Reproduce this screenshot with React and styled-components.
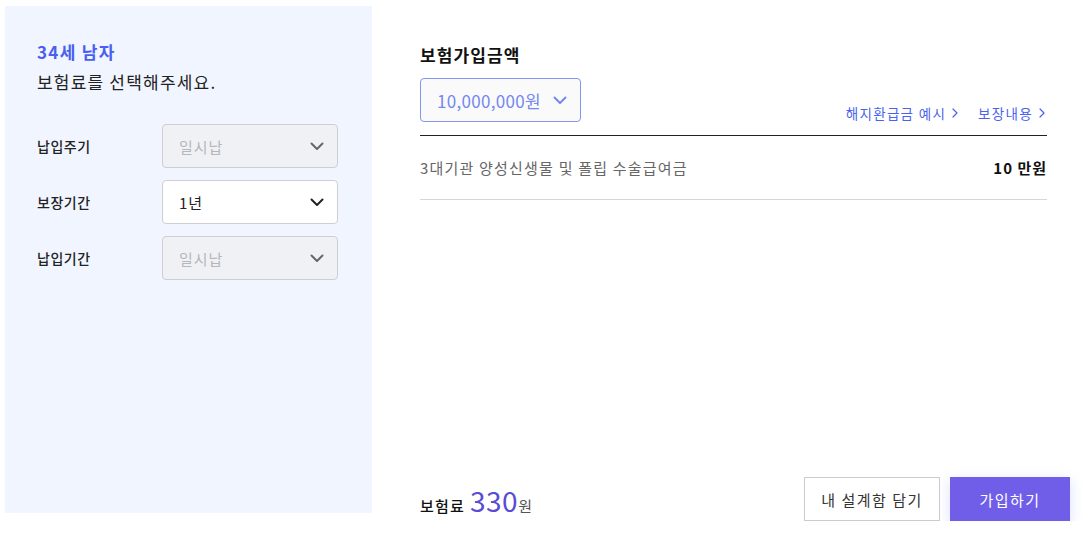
import React from "react";
import styled, { createGlobalStyle } from "styled-components";

const Global = createGlobalStyle`
  * { box-sizing: border-box; }
  body {
    margin: 0;
    background: #fff;
    font-family: "Noto Sans CJK KR", "Noto Sans", sans-serif;
    color: #222;
  }
`;

const Page = styled.div`
  display: flex;
  align-items: flex-start;
  padding: 6px 0 0 5px;
`;

const Panel = styled.aside`
  width: 367px;
  height: 507px;
  background: #f0f5ff;
  padding: 34px 34px 0 32px;
  display: flex;
  flex-direction: column;
`;

const Age = styled.div`
  font-size: 17px;
  line-height: 24px;
  font-weight: 700;
  letter-spacing: 1.3px;
  color: #4a5eef;
`;

const Sub = styled.div`
  margin-top: 6px;
  font-size: 17px;
  line-height: 24px;
  letter-spacing: 1.2px;
  color: #222;
`;

const Form = styled.div`
  margin-top: 30px;
  display: flex;
  flex-direction: column;
  gap: 12px;
`;

const Row = styled.div`
  display: flex;
  align-items: center;
`;

const Label = styled.div`
  width: 125px;
  font-size: 14px;
  font-weight: 500;
  letter-spacing: 0.5px;
  color: #222;
`;

const Select = styled.div`
  width: ${(p) => p.$w || 176}px;
  height: 44px;
  border-radius: 4px;
  border: 1px solid ${(p) => (p.$accent ? "#8395f2" : "#cfcfcf")};
  background: ${(p) => (p.$disabled ? "#eff1f5" : p.$accent ? "#fafafa" : "#fff")};
  color: ${(p) => (p.$disabled ? "#b4b6bb" : p.$accent ? "#7488ef" : "#222")};
  display: flex;
  align-items: center;
  justify-content: space-between;
  padding: 0 13px 0 16px;
  font-size: ${(p) => (p.$accent ? 17 : 15)}px;
  letter-spacing: ${(p) => (p.$accent ? 0.3 : 1)}px;
`;

const Chevron = ({ color }) => (
  <svg width="14" height="9" viewBox="0 0 14 9" fill="none">
    <path d="M1.5 1.5 L7 7 L12.5 1.5" stroke={color} strokeWidth="2" strokeLinecap="round" strokeLinejoin="round" />
  </svg>
);

const Main = styled.main`
  margin-left: 48px;
  width: 650px;
  height: 515px;
  display: flex;
  flex-direction: column;
`;

const Content = styled.div`
  margin-right: 23px;
`;

const Title = styled.h2`
  margin: 37px 0 0;
  font-size: 17px;
  line-height: 24px;
  font-weight: 700;
  letter-spacing: 1.1px;
  color: #111;
`;

const HeaderRow = styled.div`
  margin-top: 11px;
  display: flex;
  align-items: flex-end;
  justify-content: space-between;
  padding-bottom: 13px;
  border-bottom: 1px solid #222;
`;

const Links = styled.div`
  display: flex;
  gap: 20px;
  margin-right: 2px;
`;

const LinkItem = styled.a`
  font-size: 13.5px;
  line-height: 18px;
  letter-spacing: 1.3px;
  color: #4a63ee;
  text-decoration: none;
  display: flex;
  align-items: center;
  gap: 6px;
`;

const Arrow = () => (
  <svg width="6" height="10" viewBox="0 0 6 10" fill="none">
    <path d="M1 1 L5 5 L1 9" stroke="#4a63ee" strokeWidth="1.2" strokeLinecap="round" strokeLinejoin="round" />
  </svg>
);

const Item = styled.div`
  height: 64px;
  display: flex;
  align-items: center;
  justify-content: space-between;
  border-bottom: 1px solid #d6d6d6;
  font-size: 15px;
  letter-spacing: 1.2px;
`;

const ItemName = styled.span`
  color: #666;
`;

const ItemValue = styled.span`
  color: #111;
  font-weight: 700;
  letter-spacing: 1px;
`;

const Footer = styled.div`
  margin-top: auto;
  display: flex;
  align-items: center;
  justify-content: space-between;
`;

const Premium = styled.div`
  display: flex;
  align-items: baseline;
  gap: 5px;
  font-size: 15px;
  font-weight: 500;
  letter-spacing: 1.2px;
  color: #111;
  padding-top: 4px;
`;

const Amount = styled.span`
  font-size: 28px;
  font-weight: 400;
  letter-spacing: 0.5px;
  color: #5a4bd4;
  line-height: 1;
`;

const Won = styled.span`
  font-size: 15px;
  font-weight: 400;
  color: #555;
  margin-left: -5px;
`;

const Buttons = styled.div`
  display: flex;
  gap: 10px;
`;

const Button = styled.button`
  height: 44px;
  width: ${(p) => p.$w}px;
  font-family: inherit;
  font-size: 15px;
  letter-spacing: 1.5px;
  border-radius: 0;
  cursor: pointer;
  border: 1px solid ${(p) => (p.$primary ? "#705ee9" : "#cccccc")};
  background: ${(p) => (p.$primary ? "#705ee9" : "#fff")};
  color: ${(p) => (p.$primary ? "#fff" : "#333")};
  box-shadow: ${(p) => (p.$primary ? "0 4px 12px rgba(110,130,255,0.25)" : "none")};
`;

export default function App() {
  return (
    <>
      <Global />
      <Page>
        <Panel>
          <Age>34세 남자</Age>
          <Sub>보험료를 선택해주세요.</Sub>
          <Form>
            <Row>
              <Label>납입주기</Label>
              <Select $disabled>
                일시납
                <Chevron color="#666" />
              </Select>
            </Row>
            <Row>
              <Label>보장기간</Label>
              <Select>
                1년
                <Chevron color="#222" />
              </Select>
            </Row>
            <Row>
              <Label>납입기간</Label>
              <Select $disabled>
                일시납
                <Chevron color="#666" />
              </Select>
            </Row>
          </Form>
        </Panel>
        <Main>
          <Content>
            <Title>보험가입금액</Title>
            <HeaderRow>
              <Select $accent $w={161}>
                10,000,000원
                <Chevron color="#7488ef" />
              </Select>
              <Links>
                <LinkItem>해지환급금 예시<Arrow /></LinkItem>
                <LinkItem>보장내용<Arrow /></LinkItem>
              </Links>
            </HeaderRow>
            <Item>
              <ItemName>3대기관 양성신생물 및 폴립 수술급여금</ItemName>
              <ItemValue>10 만원</ItemValue>
            </Item>
          </Content>
          <Footer>
            <Premium>
              보험료 <Amount>330</Amount>
              <Won>원</Won>
            </Premium>
            <Buttons>
              <Button $w={136}>내 설계함 담기</Button>
              <Button $primary $w={120}>가입하기</Button>
            </Buttons>
          </Footer>
        </Main>
      </Page>
    </>
  );
}
